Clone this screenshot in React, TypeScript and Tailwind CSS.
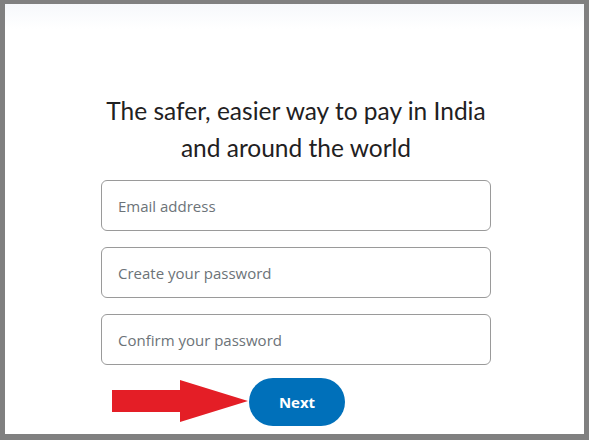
export default function App() {
  return (
    <div className="w-[589px] h-[440px] bg-[#808080] pl-[5px] pt-[4px] pr-[5px] pb-[6px]">
      <div className="relative h-full bg-white bg-gradient-to-b from-[#f6f8fb] via-white to-white bg-[length:100%_50px] bg-no-repeat">
        <div className="flex flex-col items-center pt-[88px] pl-[3px]">
          <h1
            className="text-center text-[24.5px] leading-[37px] text-[#1f2122] font-normal"
            style={{ fontFamily: 'Lato, "Noto Sans", sans-serif' }}
          >
            The safer, easier way to pay in India
            <br />
            and around the world
          </h1>
          <div
            className="mt-[14px] flex w-[390px] flex-col gap-4"
            style={{ fontFamily: '"Open Sans", "Noto Sans", sans-serif' }}
          >
            {["Email address", "Create your password", "Confirm your password"].map((p) => (
              <input
                key={p}
                placeholder={p}
                className="h-[51px] w-full rounded-[6px] border border-[#9a9a9a] px-4 text-[15px] text-[#2c2e2f] placeholder:text-[#6c7378] outline-none"
              />
            ))}
          </div>
          <div className="relative mt-[13px] w-[390px]">
            <svg className="absolute left-[11px] top-[2px]" width="136" height="44" viewBox="0 0 136 44">
              <polygon points="0,10 68,10 68,0 136,21 68,42 68,32 0,32" fill="#e41e26" />
            </svg>
            <button
              className="ml-[148px] h-[48px] w-[96px] rounded-full bg-[#0070ba] text-[15px] font-bold text-white"
              style={{ fontFamily: '"Open Sans", "Noto Sans", sans-serif' }}
            >
              Next
            </button>
          </div>
        </div>
      </div>
    </div>
  );
}
